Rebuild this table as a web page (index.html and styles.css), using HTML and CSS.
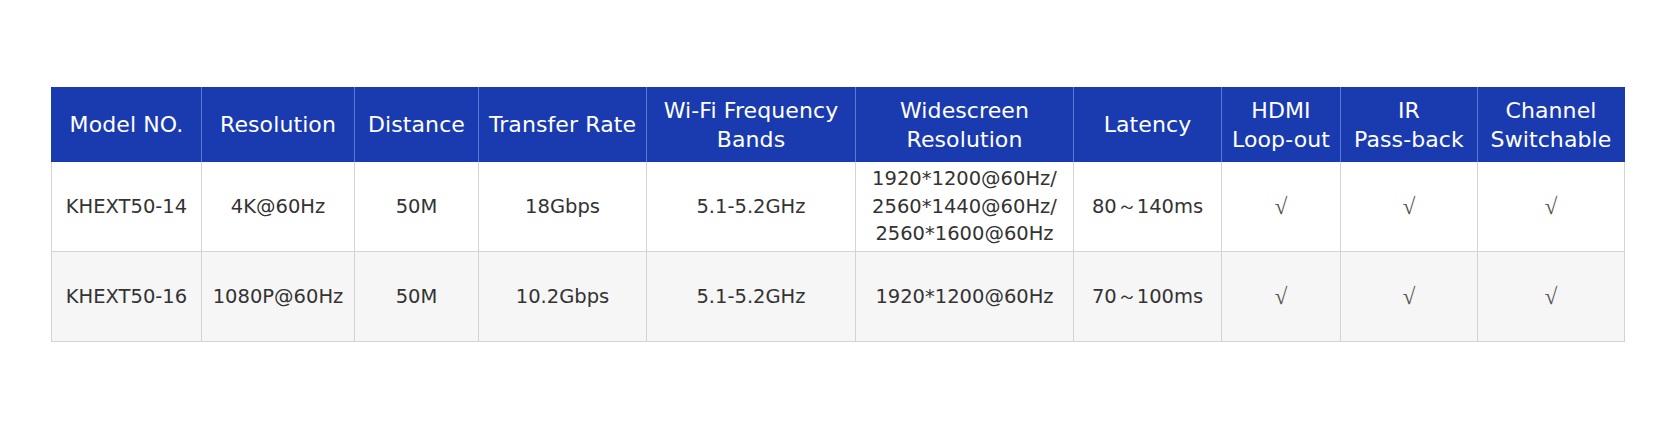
FILE: index.html
```html
<!DOCTYPE html>
<html>
<head>
<meta charset="utf-8">
<link rel="stylesheet" href="styles.css">
</head>
<body>
<div class="wrap">
<table class="spec">
<colgroup>
<col class="c1"><col class="c2"><col class="c3"><col class="c4"><col class="c5"><col class="c6"><col class="c7"><col class="c8"><col class="c9"><col class="c10">
</colgroup>
<thead>
<tr>
<th>Model NO.</th>
<th>Resolution</th>
<th>Distance</th>
<th>Transfer Rate</th>
<th>Wi-Fi Frequency<br>Bands</th>
<th>Widescreen<br>Resolution</th>
<th>Latency</th>
<th>HDMI<br>Loop-out</th>
<th>IR<br>Pass-back</th>
<th>Channel<br>Switchable</th>
</tr>
</thead>
<tbody>
<tr>
<td>KHEXT50-14</td>
<td>4K@60Hz</td>
<td>50M</td>
<td>18Gbps</td>
<td>5.1-5.2GHz</td>
<td>1920*1200@60Hz/<br>2560*1440@60Hz/<br>2560*1600@60Hz</td>
<td>80～140ms</td>
<td class="chk">√</td>
<td class="chk">√</td>
<td class="chk">√</td>
</tr>
<tr class="alt">
<td>KHEXT50-16</td>
<td>1080P@60Hz</td>
<td>50M</td>
<td>10.2Gbps</td>
<td>5.1-5.2GHz</td>
<td>1920*1200@60Hz</td>
<td>70～100ms</td>
<td class="chk">√</td>
<td class="chk">√</td>
<td class="chk">√</td>
</tr>
</tbody>
</table>
</div>
</body>
</html>
```

FILE: styles.css
```css
html, body {
  margin: 0;
  padding: 0;
  background: #ffffff;
}
.wrap {
  padding: 87px 0 0 51px;
}
.spec {
  border-collapse: collapse;
  table-layout: fixed;
  width: 1574px;
  font-family: "DejaVu Sans", sans-serif;
  color: #333333;
}
.c1 { width: 150px; }
.c2 { width: 153px; }
.c3 { width: 124px; }
.c4 { width: 168px; }
.c5 { width: 209px; }
.c6 { width: 218px; }
.c7 { width: 148px; }
.c8 { width: 119px; }
.c9 { width: 137px; }
.c10 { width: 147px; }
.spec th {
  background: #1a3bb0;
  color: #ffffff;
  font-weight: normal;
  font-size: 22px;
  line-height: 29px;
  height: 75px;
  padding: 0;
  text-align: center;
  vertical-align: middle;
  border-left: 1px solid #5b7ad6;
  border-right: 1px solid #5b7ad6;
  white-space: nowrap;
  letter-spacing: 0.1px;
}
.spec th:first-child { border-left-color: #1a3bb0; }
.spec th:last-child { border-right-color: #1a3bb0; }
.spec td {
  font-size: 19.5px;
  line-height: 27.5px;
  height: 89px;
  padding: 0;
  text-align: center;
  vertical-align: middle;
  border: 1px solid #d4d4d4;
  white-space: nowrap;
}
.spec tbody tr:first-child td {
  border-top: none;
}
.spec .alt td {
  background: #f6f6f6;
}
.spec td.chk {
  font-family: "Liberation Serif", serif;
  font-size: 23px;
  color: #555555;
}
```
